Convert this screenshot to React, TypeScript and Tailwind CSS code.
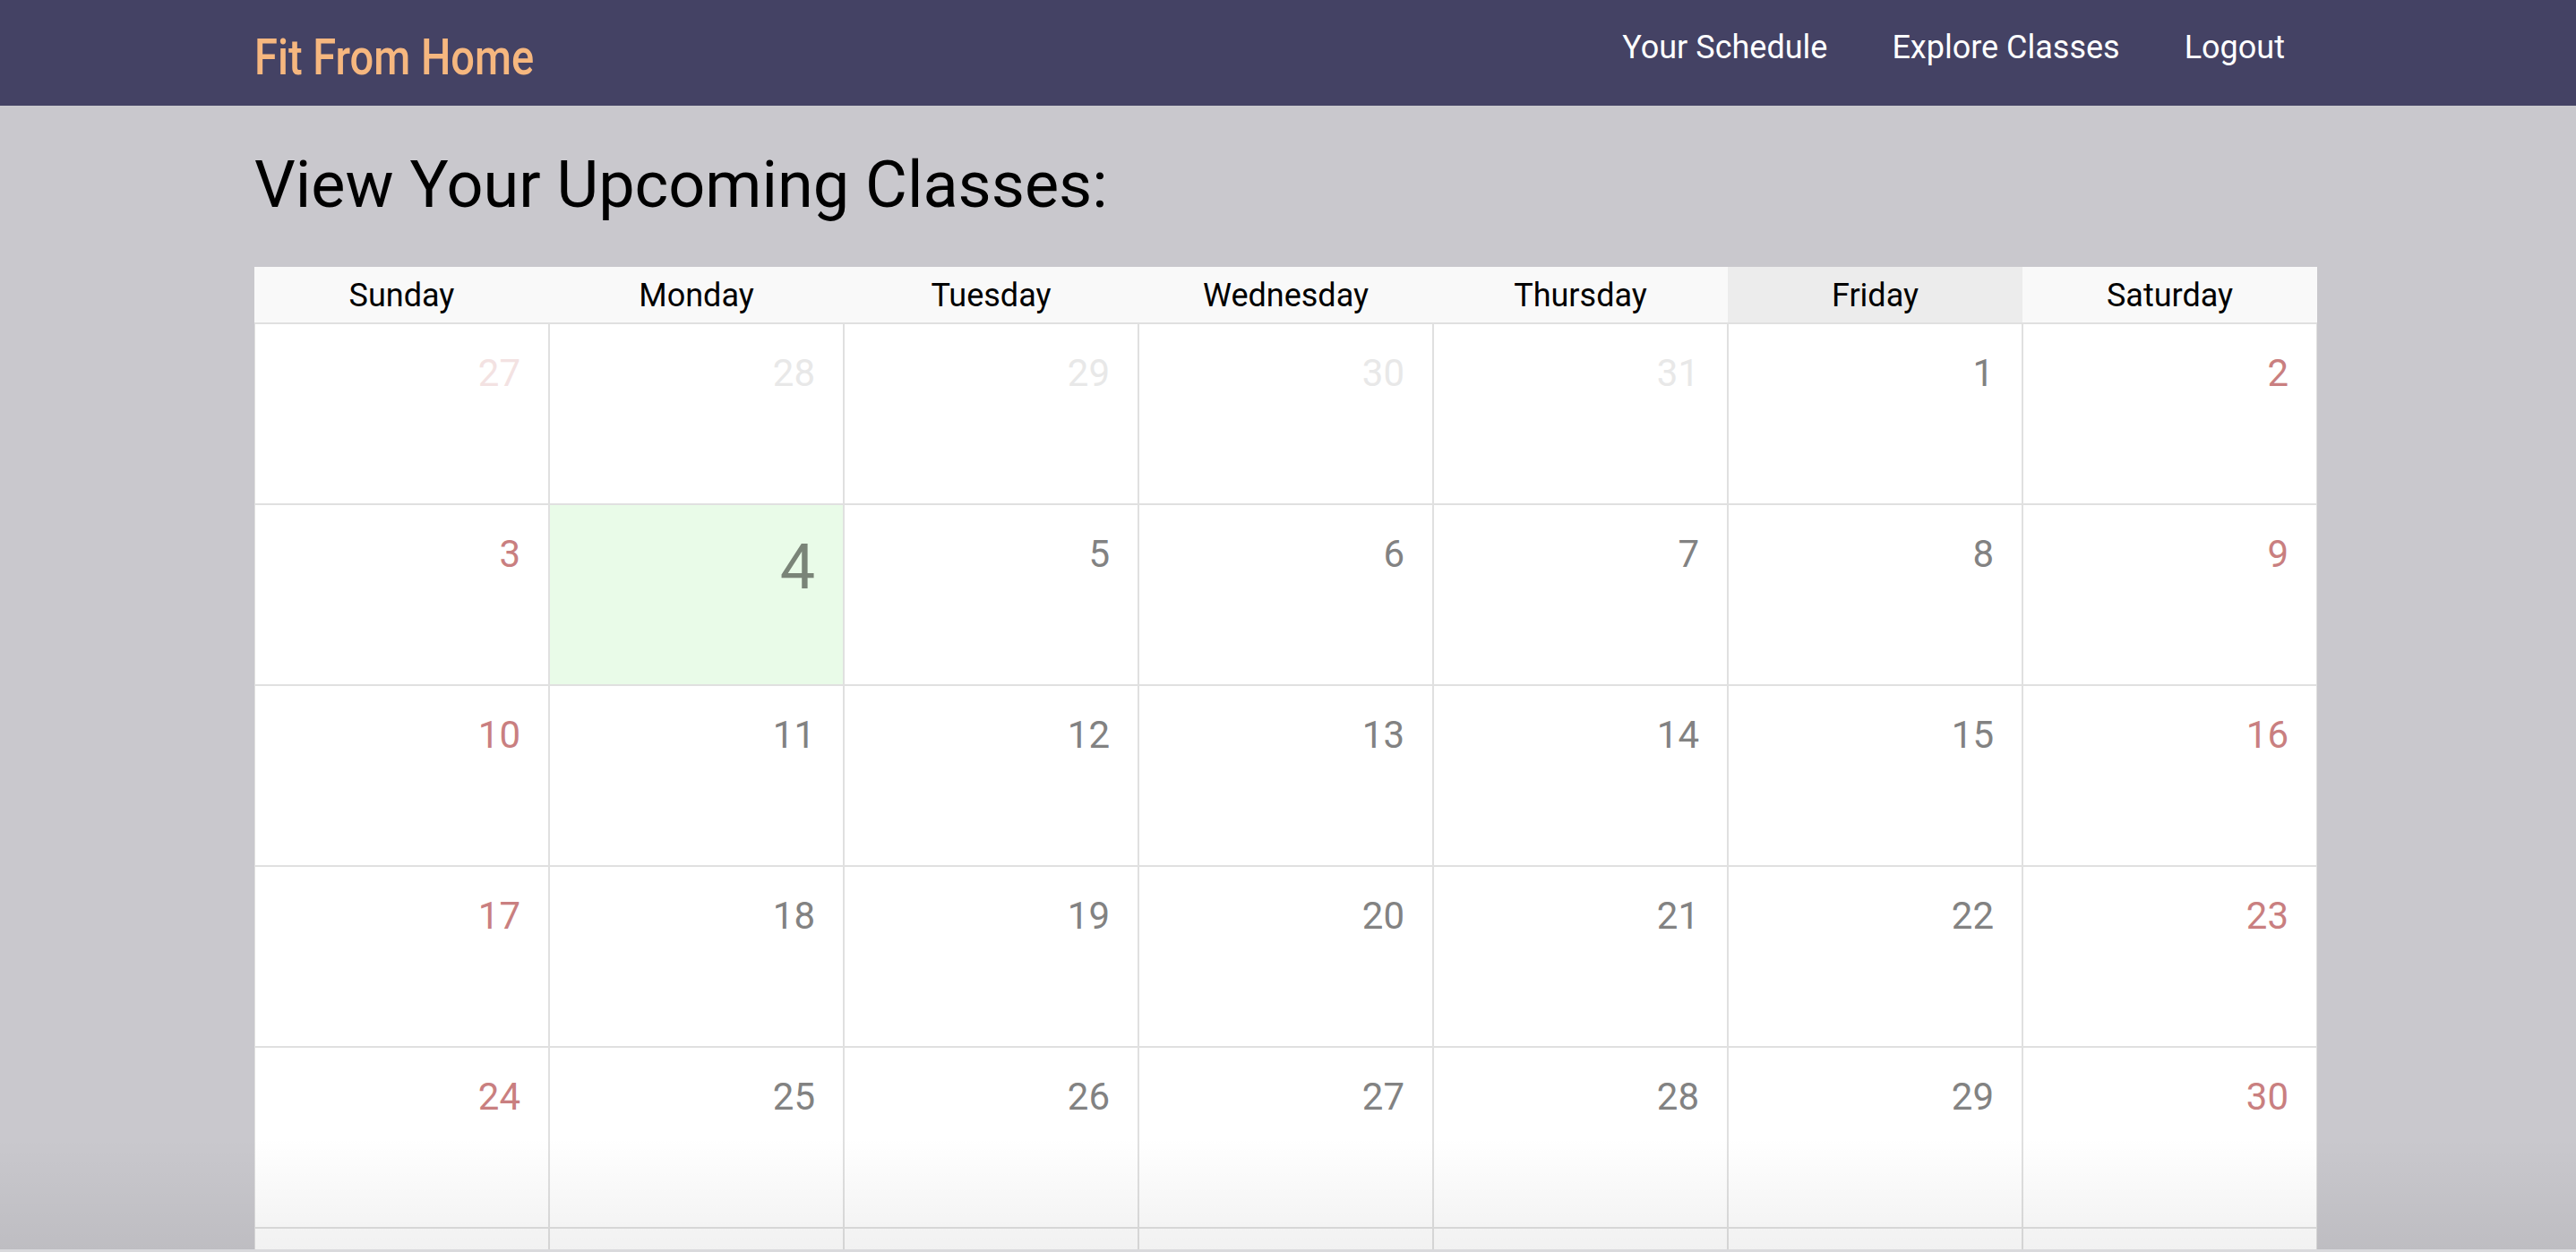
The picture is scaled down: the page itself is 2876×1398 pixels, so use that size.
import React from "react";

type Cell = { n: number; kind: "prev" | "cur" | "next"; today?: boolean };

const days = ["Sunday", "Monday", "Tuesday", "Wednesday", "Thursday", "Friday", "Saturday"];

function buildCells(): Cell[] {
  const cells: Cell[] = [];
  [27, 28, 29, 30, 31].forEach((n) => cells.push({ n, kind: "prev" }));
  for (let i = 1; i <= 30; i++) cells.push({ n: i, kind: "cur", today: i === 4 });
  let k = 1;
  while (cells.length < 42) cells.push({ n: k++, kind: "next" });
  return cells;
}

function numberClass(c: Cell, col: number) {
  const weekend = col === 0 || col === 6;
  if (c.kind !== "cur") return weekend ? "text-[#f3e2e2]" : "text-[#e8e8e8]";
  if (c.today) return "text-[#7a8478]";
  return weekend ? "text-[#c97f80]" : "text-[#828282]";
}

export default function App() {
  const cells = buildCells();
  return (
    <div
      className="relative min-h-screen bg-[#c9c8cd] overflow-hidden"
      style={{ fontFamily: "Roboto, 'Noto Sans', Arial, sans-serif" }}
    >
      <nav className="h-[118px] bg-[#444264]">
        <div className="ml-[284px] w-[2303px] flex items-start justify-between pt-[32px]">
          <div className="text-[56px] leading-[66px] font-medium text-[#f6b77f] origin-left scale-x-[0.84] whitespace-nowrap -mt-px">
            Fit From Home
          </div>
          <div className="flex items-start">
            <a className="px-[36px] text-[36px] leading-[42px] text-white">Your Schedule</a>
            <a className="px-[36px] text-[36px] leading-[42px] text-white">Explore Classes</a>
            <a className="px-[36px] text-[36px] leading-[42px] text-white">Logout</a>
          </div>
        </div>
      </nav>

      <main className="ml-[284px] w-[2303px]">
        <h1 className="mt-[47px] text-[72px] leading-[84px] text-black font-normal">
          View Your Upcoming Classes:
        </h1>

        <div className="mt-[49px] bg-white">
          <div className="grid grid-cols-7 h-[63px] border-b border-[#e0e0e0] bg-[#f9f9f9]">
            {days.map((d) => (
              <div
                key={d}
                className={`flex items-center justify-center pt-[2px] text-[36px] leading-[42px] text-black ${
                  d === "Friday" ? "bg-[#ececec]" : ""
                }`}
              >
                {d}
              </div>
            ))}
          </div>
          <div className="grid grid-cols-7">
            {cells.map((c, i) => {
              const col = i % 7;
              return (
                <div
                  key={i}
                  className={`h-[202px] border border-[#e0e0e0] flex justify-end items-start pr-[31px] ${
                    c.today ? "bg-[#e9fbe8] pt-[28px]" : "bg-white pt-[30px]"
                  }`}
                >
                  {c.kind !== "next" && (
                    <span
                      className={`${c.today ? "text-[70px] leading-[82px]" : "text-[42px] leading-[49px]"} ${numberClass(
                        c,
                        col
                      )}`}
                    >
                      {c.n}
                    </span>
                  )}
                </div>
              );
            })}
          </div>
        </div>
      </main>

      <div className="pointer-events-none absolute left-0 right-0 top-[1270px] h-[125px] bg-gradient-to-b from-transparent to-[rgba(0,0,0,0.055)]" />
      <div className="pointer-events-none absolute left-0 right-0 top-[1395px] h-[3px] bg-[#d9d9dc]" />
    </div>
  );
}
